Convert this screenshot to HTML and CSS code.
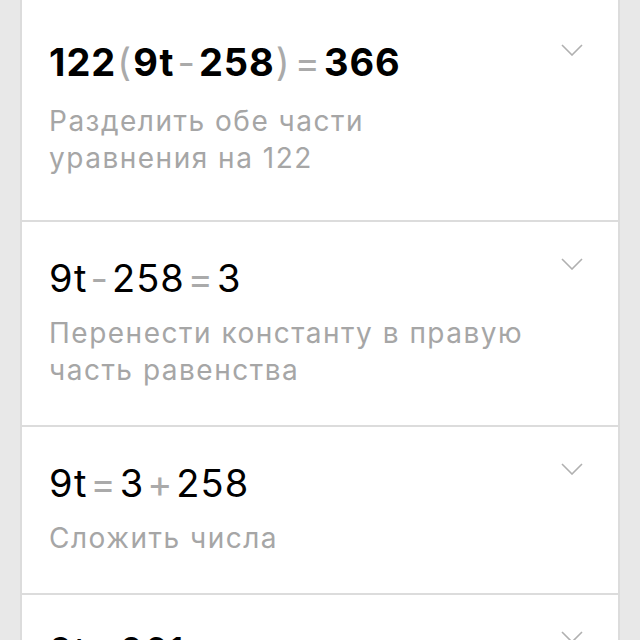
FILE: index.html
```html
<!DOCTYPE html>
<html lang="ru">
  <head>
    <meta charset="UTF-8" />
    <meta name="viewport" content="width=device-width, initial-scale=1.0" />
    <title>Решение уравнения</title>
    <link rel="stylesheet" href="styles.css">
  </head>
  <body>
    <main class="steps">
      <section class="step step-first">
        <div class="step-body">
          <div class="eq eq-bold">122<span class="op par">(</span>9t<span class="op">-</span>258<span class="op par">)</span><span class="op">=</span>366</div>
          <p class="note">Разделить обе части<br>уравнения на 122</p>
        </div>
        <svg class="chevron" width="22" height="12" viewBox="0 0 22 12"><path d="M1 1 L11 11 L21 1" /></svg>
      </section>
      <section class="step">
        <div class="step-body">
          <div class="eq">9t<span class="op">-</span>258<span class="op">=</span>3</div>
          <p class="note">Перенести константу в правую<br>часть равенства</p>
        </div>
        <svg class="chevron" width="22" height="12" viewBox="0 0 22 12"><path d="M1 1 L11 11 L21 1" /></svg>
      </section>
      <section class="step">
        <div class="step-body">
          <div class="eq">9t<span class="op">=</span>3<span class="op">+</span>258</div>
          <p class="note">Сложить числа</p>
        </div>
        <svg class="chevron" width="22" height="12" viewBox="0 0 22 12"><path d="M1 1 L11 11 L21 1" /></svg>
      </section>
      <section class="step">
        <div class="step-body">
          <div class="eq">9t<span class="op">=</span>261</div>
          <p class="note">Разделить обе части<br>уравнения на 9</p>
        </div>
        <svg class="chevron" width="22" height="12" viewBox="0 0 22 12"><path d="M1 1 L11 11 L21 1" /></svg>
      </section>
    </main>
  </body>
</html>
```

FILE: styles.css
```css
html,
body {
  height: 100%;
  margin: 0;
}
body {
  background: #e8e8e8;
  font-family: Inter, "Liberation Sans", sans-serif;
  overflow: hidden;
}
.steps {
  margin: 0 20px;
  min-height: 100%;
  background: #fff;
  border-left: 2px solid #dcdcdc;
  border-right: 2px solid #dcdcdc;
}
.step {
  display: flex;
  align-items: flex-start;
  padding: 33px 35px 36px 27px;
  border-bottom: 2px solid #dcdcdc;
}
.step-body {
  flex: 1;
}
.eq {
  font-size: 38px;
  line-height: 46px;
  letter-spacing: 1px;
  color: #000;
}
.eq-bold {
  font-weight: 700;
}
.op {
  margin: 0 3px;
  color: #aaa;
  font-weight: 400;
}
.par {
  margin: 0 1px;
}
.note {
  margin: 14px 0 0 0;
  font-size: 28px;
  line-height: 37px;
  letter-spacing: 1.5px;
  color: #a6a6a6;
}
.chevron {
  margin-top: 3px;
  fill: none;
  stroke: #b0b0b0;
  stroke-width: 1.6;
}
.step-first {
  padding-top: 39px;
  padding-bottom: 43px;
}
.step-first .note {
  margin-top: 18px;
}
.step-first .chevron {
  margin-top: 5px;
}
```
